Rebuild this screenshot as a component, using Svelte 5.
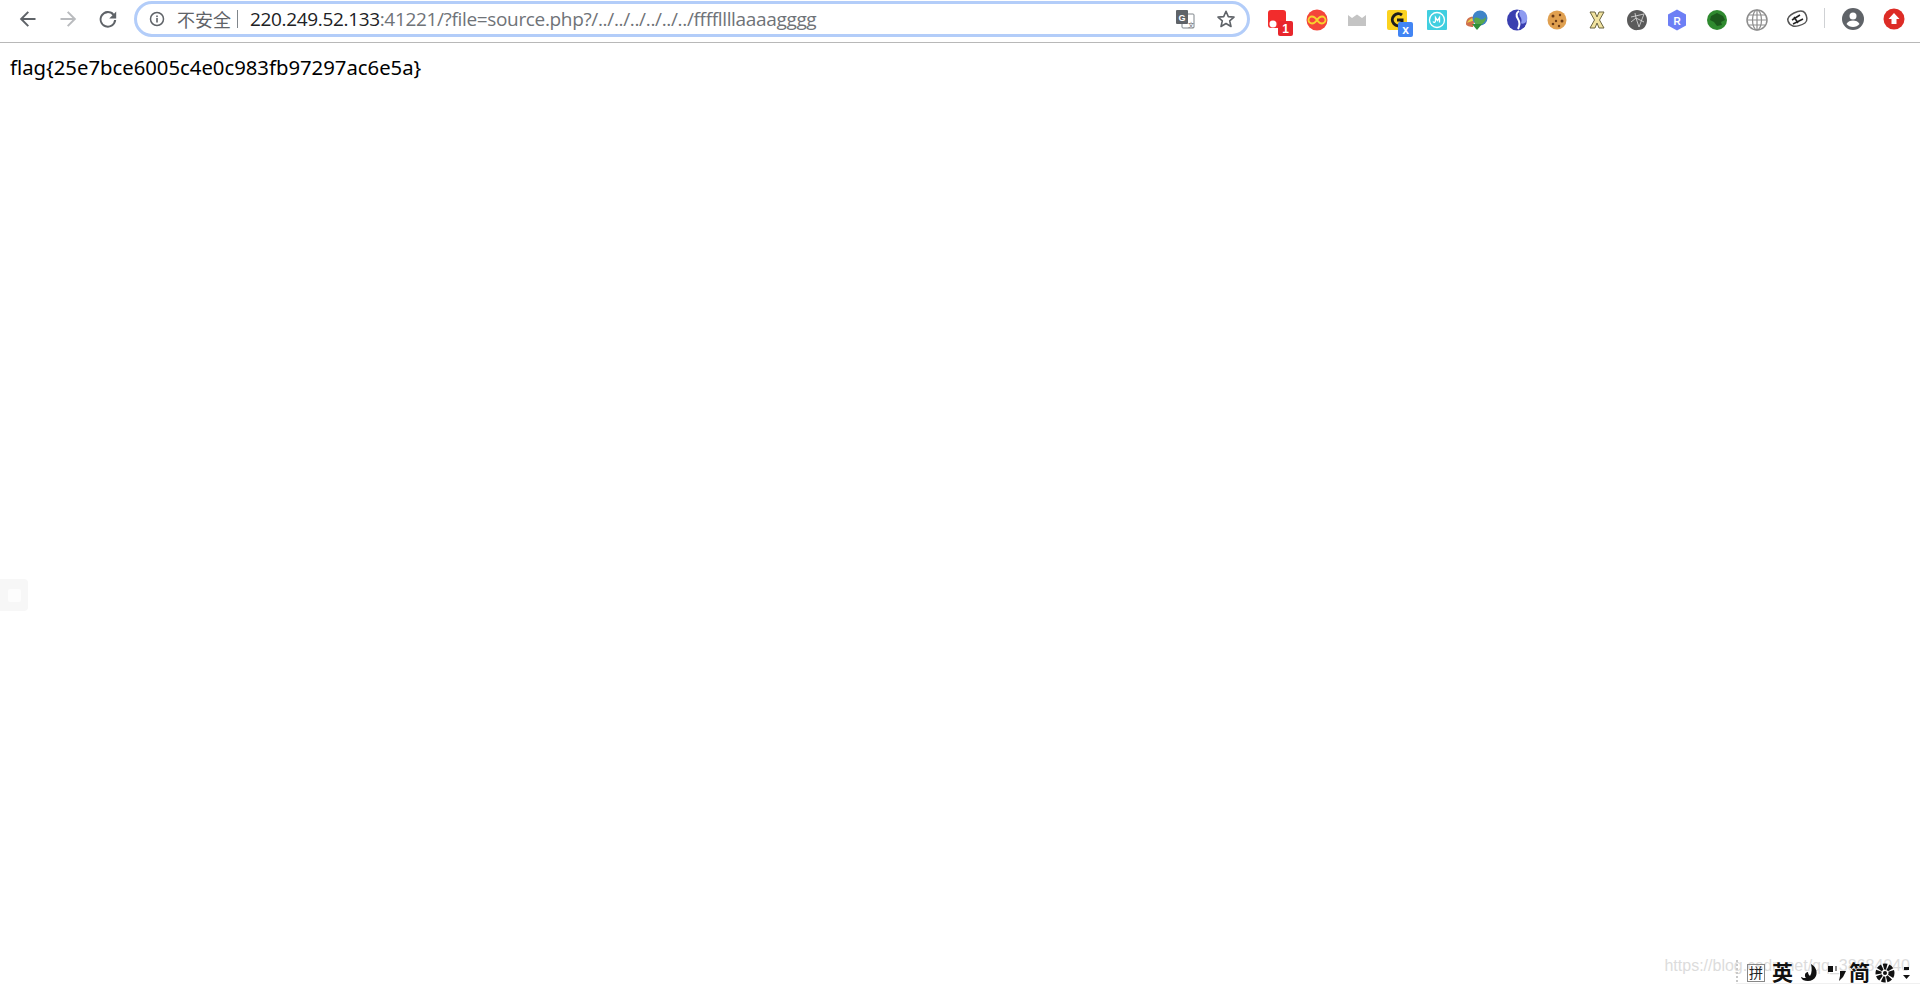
<script lang="ts">
  const host = '220.249.52.133';
  const rest = ':41221/?file=source.php?/../../../../../../ffffllllaaaagggg';
  const flag = 'flag{25e7bce6005c4e0c983fb97297ac6e5a}';
</script>

<div class="page">
  <header class="toolbar">
    <nav class="nav">
      <button class="nav-btn" aria-label="back">
        <svg width="18" height="18" viewBox="0 0 18 18"><path d="M16.5 8H4.6l5.4-5.4L8.6 1.2 0.8 9l7.8 7.8 1.4-1.4L4.6 10h11.9z" fill="#5f6368"/></svg>
      </button>
      <button class="nav-btn" aria-label="forward">
        <svg width="18" height="18" viewBox="0 0 18 18"><path d="M1.5 8h11.900L8 2.600l1.400-1.400L17.200 9l-7.800 7.800L8 15.400l5.400-5.400H1.500z" fill="#b9bbbe"/></svg>
      </button>
      <button class="nav-btn" aria-label="reload">
        <svg width="18" height="18" viewBox="0 0 18 18"><path d="M15 3.700A8.300 8.300 0 1 0 17.200 10h-2.100A6.300 6.300 0 1 1 13.500 5.200L10.200 8.400H17.200V1.500z" fill="#5f6368"/></svg>
      </button>
    </nav>

    <div class="omnibox">
      <svg class="info" width="16" height="16" viewBox="0 0 16 16">
        <circle cx="8" cy="8" r="6.500" fill="none" stroke="#5f6368" stroke-width="1.500"/>
        <rect x="7.200" y="7" width="1.600" height="4.500" fill="#5f6368"/>
        <rect x="7.200" y="4.500" width="1.600" height="1.600" fill="#5f6368"/>
      </svg>
      <span class="insecure">不安全</span>
      <span class="divider"></span>
      <span class="url"><span class="host">{host}</span>{rest}</span>
      <span class="grow"></span>
      <svg class="translate" width="20" height="20" viewBox="0 0 20 20">
        <rect x="7" y="5" width="12" height="14" rx="1" fill="#fff" stroke="#80868b"/>
        <rect x="1" y="1" width="12" height="14" rx="1" fill="#5f6368"/>
        <text x="7" y="12" class="g">G</text>
        <text x="13" y="17.500" class="wen">文</text>
      </svg>
      <svg class="star" width="20" height="20" viewBox="0 0 20 20">
        <path d="M10 2.300l2.300 5.300 5.700.5-4.300 3.800 1.300 5.600L10 14.500l-5 3 1.300-5.600L2 8.100l5.700-.5z" fill="none" stroke="#5f6368" stroke-width="1.600" stroke-linejoin="round"/>
      </svg>
    </div>

    <div class="extensions">
      <span class="ext">
        <svg width="32" height="32" viewBox="0 0 32 32">
          <rect x="7" y="8" width="18" height="18" rx="3" fill="#f22c2c"/>
          <circle cx="12" cy="22" r="3.500" fill="#fff"/>
          <rect x="17" y="19" width="15" height="15" rx="2" fill="#e8262c"/>
          <text x="24.500" y="31" class="badge">1</text>
        </svg>
      </span>
      <span class="ext">
        <svg width="32" height="32" viewBox="0 0 32 32">
          <circle cx="16" cy="18" r="10.500" fill="#f4453a"/>
          <path d="M16 18c-2-3-3.500-3.500-5-3.500a3.500 3.500 0 0 0 0 7c1.500 0 3-.5 5-3.500s3.500-3.500 5-3.500a3.500 3.500 0 0 1 0 7c-1.500 0-3-.5-5-3.500z" fill="none" stroke="#f7d32e" stroke-width="1.800"/>
        </svg>
      </span>
      <span class="ext">
        <svg width="32" height="32" viewBox="0 0 32 32">
          <path d="M7 13l4 3 5-3.500 5 3.500 4-3v11H7z" fill="#c4c4c4"/>
        </svg>
      </span>
      <span class="ext">
        <svg width="32" height="32" viewBox="0 0 32 32">
          <rect x="6" y="8" width="20" height="20" rx="2" fill="#fbd21f"/>
          <path d="M21 13a6 6 0 1 0 0 9.500v-4.500h-5" fill="none" stroke="#1d1d1d" stroke-width="3"/>
          <rect x="17" y="20" width="15" height="15" rx="2" fill="#4285f4"/>
          <text x="24.500" y="32" class="badge">x</text>
        </svg>
      </span>
      <span class="ext">
        <svg width="32" height="32" viewBox="0 0 32 32">
          <rect x="6" y="8" width="20" height="20" rx="1" fill="#41cfe0"/>
          <circle cx="16" cy="18" r="7.500" fill="none" stroke="#fff" stroke-width="1.300"/>
          <path d="M12 19.500c1 1.500 2.500 1 2.500-1v-3l2 3 2-3v5" fill="none" stroke="#fff" stroke-width="1.300"/>
        </svg>
      </span>
      <span class="ext">
        <svg width="32" height="32" viewBox="0 0 32 32">
          <path d="M5 22c0-6 4-8 9-7l-2 10c-3 0-7-1-7-3z" fill="#d0704c"/>
          <path d="M6 21c1-3 4-5 7-5l-1 3c-2 0-4 1-6 2z" fill="#e8cf46"/>
          <circle cx="19" cy="16" r="7.500" fill="#3f84c8"/>
          <path d="M13 17c2-3 5-1 6 0s3 1 6-2c0 4-3 8-7 8s-5-3-5-6z" fill="#5aa84a"/>
          <path d="M11 22h10l-5 6z" fill="#2f8f3a"/>
        </svg>
      </span>
      <span class="ext">
        <svg width="32" height="32" viewBox="0 0 32 32">
          <ellipse cx="16" cy="18" rx="10" ry="10.500" fill="#3a3fb0"/>
          <path d="M20 7.800c5 1 7 6 6 10.500-1 3-4 4-6 3 1-3 .5-5-1-7-1-2-1-5 1-6.500z" fill="#8e9bf0"/>
          <path d="M18 9c-3 2-3 5-1 8s2 6 0 10" fill="none" stroke="#fff" stroke-width="2"/>
        </svg>
      </span>
      <span class="ext">
        <svg width="32" height="32" viewBox="0 0 32 32">
          <circle cx="16" cy="18" r="9.500" fill="#e0a050"/>
          <circle cx="12" cy="14" r="1.500" fill="#6a3a18"/>
          <circle cx="19" cy="13" r="1.200" fill="#6a3a18"/>
          <circle cx="21" cy="19" r="1.500" fill="#6a3a18"/>
          <circle cx="15" cy="19" r="1.200" fill="#6a3a18"/>
          <circle cx="12" cy="22" r="1.300" fill="#6a3a18"/>
          <circle cx="18" cy="24" r="1.200" fill="#6a3a18"/>
        </svg>
      </span>
      <span class="ext">
        <svg width="32" height="32" viewBox="0 0 32 32">
          <path d="M9 10h5l2 5 2-5h5l-4.500 8 4.500 8h-5l-2-5-2 5H9l4.500-8z" fill="#f1e3a0" stroke="#6b6540" stroke-width="1"/>
        </svg>
      </span>
      <span class="ext">
        <svg width="32" height="32" viewBox="0 0 32 32">
          <path d="M16 8c5 0 10 4 10 10 0 5-3 10-9 10-6 1-11-4-11-10 0-6 5-10 10-10z" fill="#5a5a5a"/>
          <path d="M10 15l13-3-5 13-3-9 8 4M14 11l1 5-5 4" fill="none" stroke="#ddd" stroke-width=".8"/>
        </svg>
      </span>
      <span class="ext">
        <svg width="32" height="32" viewBox="0 0 32 32">
          <path d="M16 7.500l9 5v11l-9 5-9-5v-11z" fill="#6d7ff5"/>
          <text x="16" y="22.500" class="r">R</text>
        </svg>
      </span>
      <span class="ext">
        <svg width="32" height="32" viewBox="0 0 32 32">
          <circle cx="16" cy="18" r="10" fill="#2f8a2f"/>
          <path d="M10 14l6-3 6 3 2 4-4 2 1 3-5 1-3-4-4-2z" fill="#1c5a1c"/>
        </svg>
      </span>
      <span class="ext">
        <svg width="32" height="32" viewBox="0 0 32 32">
          <circle cx="16" cy="18" r="10" fill="none" stroke="#8d8d8d" stroke-width="1.500"/>
          <ellipse cx="16" cy="18" rx="4.500" ry="10" fill="none" stroke="#8d8d8d" stroke-width="1.200"/>
          <path d="M16 8v20M6 18h20M7.500 13h17M7.500 23h17" fill="none" stroke="#8d8d8d" stroke-width="1.200"/>
        </svg>
      </span>
      <span class="ext">
        <svg width="32" height="32" viewBox="0 0 32 32">
          <path d="M7 19c-1-3 2-6 6-8 4-2 9-3 11 0 2 3 3 8 0 10s-9 4-12 3-4-2-5-5z" fill="#fff" stroke="#555" stroke-width="1.500"/>
          <path d="M11 18l8-5M12 22l10-5M13 15l4 6" fill="none" stroke="#222" stroke-width="1.500"/>
        </svg>
      </span>
    </div>

    <span class="sep"></span>

    <div class="profile">
      <svg width="22" height="22" viewBox="0 0 22 22">
        <circle cx="11" cy="11" r="11" fill="#5f6368"/>
        <circle cx="11" cy="8" r="3.500" fill="#fff"/>
        <path d="M4.500 16c1-2.500 4-3.500 6.500-3.500s5.500 1 6.500 3.500c-1.500 2-4 3-6.500 3s-5-1-6.500-3z" fill="#fff"/>
      </svg>
      <svg width="22" height="22" viewBox="0 0 22 22">
        <circle cx="11" cy="11" r="10.500" fill="#dd2c26"/>
        <path d="M11 5l5.500 6H13.500v5h-5v-5H5.500z" fill="#fff"/>
      </svg>
    </div>
  </header>

  <main class="content">{flag}</main>

  <div class="side-tab"><span></span></div>

  <div class="watermark">https://blog.csdn.net/qq_38684040</div>
  <div class="ime">
    <span class="grip"></span>
    <span class="pin">拼</span>
    <span class="ime-char ying">英</span>
    <svg class="moon" width="20" height="20" viewBox="0 0 20 20"><path d="M11 1c4 2 7 7 5 12s-8 6-13 4c-1-1-2-2-2-3 2 1 3 1 5 1-2-2-1-6 2-6 0 2 1 3 2 4 2-3 2-8 1-12z" fill="#111"/></svg>
    <svg class="punct" width="20" height="22" viewBox="0 0 20 22"><rect x="1" y="4" width="5" height="6" fill="#111"/><rect x="8" y="4" width="2" height="5" fill="#888"/><path d="M13 9h6l-3 6-4 4 1-5z" fill="#111"/></svg>
    <span class="ime-char jian">简</span>
    <svg class="gear" width="20" height="20" viewBox="0 0 20 20"><circle cx="10" cy="10" r="6.500" fill="none" stroke="#111" stroke-width="6" stroke-dasharray="3.500 1.200"/><circle cx="10" cy="10" r="2" fill="#111"/></svg>
    <svg class="more" width="10" height="22" viewBox="0 0 10 22"><rect x="2" y="5" width="5" height="3" fill="#111"/><path d="M1 13h7l-3.500 4z" fill="#111"/></svg>
  </div>
</div>

<style>
  :global(body) {
    background: #fff;
  }
  .page {
    position: relative;
    height: 984px;
    overflow: hidden;
    font-family: 'Liberation Sans', 'Noto Sans CJK SC', sans-serif;
  }
  .toolbar {
    display: flex;
    align-items: center;
    height: 42px;
    border-bottom: 1px solid #b8b8b8;
    background: #fff;
  }
  .nav {
    display: flex;
    gap: 2px;
    padding-left: 9px;
    width: 129px;
    box-sizing: border-box;
    margin-top: -4px;
  }
  .nav-btn {
    display: flex;
    align-items: center;
    justify-content: center;
    width: 38px;
    height: 30px;
    padding: 0;
    border: 0;
    background: none;
  }
  .omnibox {
    display: flex;
    align-items: center;
    box-sizing: border-box;
    width: 1116px;
    height: 36px;
    margin-left: 5px;
    margin-top: -5px;
    padding: 0 11px 0 12px;
    border: 3px solid #b3cdf9;
    border-radius: 18px;
  }
  .info {
    flex: none;
  }
  .insecure {
    margin-left: 12px;
    font-size: 18px;
    color: #5f6368;
  }
  .divider {
    width: 1px;
    height: 18px;
    margin: 0 12px 0 6px;
    background: #80868b;
  }
  .url {
    font-family: 'Open Sans', sans-serif;
    font-size: 19px;
    letter-spacing: -0.34px;
    color: #6f7378;
    white-space: nowrap;
  }
  .host {
    color: #202124;
  }
  .grow {
    flex: 1;
  }
  .translate {
    margin-right: 21px;
  }
  .g {
    font: bold 9px 'Liberation Sans', sans-serif;
    fill: #fff;
    text-anchor: middle;
  }
  .wen {
    font: 6px 'Noto Sans CJK SC', sans-serif;
    fill: #5f6368;
  }
  .extensions {
    display: flex;
    margin-left: 7px;
    margin-top: -6px;
  }
  .ext {
    display: flex;
    align-items: center;
    justify-content: center;
    width: 40px;
    height: 36px;
  }
  .ext svg {
    overflow: visible;
  }
  .badge {
    font: bold 12px 'Liberation Sans', sans-serif;
    fill: #fff;
    text-anchor: middle;
  }
  .r {
    font: bold 10px 'Liberation Sans', sans-serif;
    fill: #fff;
    text-anchor: middle;
  }
  .sep {
    width: 1px;
    height: 20px;
    margin-left: 7px;
    margin-top: -6px;
    background: #cfd1d4;
  }
  .profile {
    display: flex;
    gap: 19px;
    margin-left: 17px;
    margin-top: -5px;
  }
  .content {
    padding: 12px 0 0 10px;
    font-family: 'Noto Sans', sans-serif;
    font-size: 20.3px;
    line-height: 24px;
    color: #000;
  }
  .side-tab {
    position: absolute;
    left: 0;
    top: 579px;
    display: flex;
    align-items: center;
    justify-content: center;
    width: 28px;
    height: 32px;
    border-radius: 0 4px 4px 0;
    background: #f7f7f7;
  }
  .side-tab span {
    width: 13px;
    height: 13px;
    border-radius: 2px;
    background: #fdfdfd;
  }
  .watermark {
    position: absolute;
    right: 10px;
    top: 957px;
    font-size: 16px;
    color: #dcdcdc;
    white-space: nowrap;
  }
  .ime {
    position: absolute;
    right: 0;
    top: 954px;
    box-sizing: border-box;
    display: flex;
    align-items: center;
    width: 184px;
    height: 30px;
    padding-top: 8px;
    border-bottom: 1px solid #f0f0f0;
  }
  .grip {
    width: 0;
    height: 26px;
    border-left: 2px dotted #c8c8c8;
  }
  .pin {
    box-sizing: border-box;
    flex: none;
    width: 18px;
    height: 18px;
    margin-left: 9px;
    border: 1px solid #888;
    font-size: 14px;
    line-height: 16px;
    text-align: center;
    color: #222;
  }
  .ime-char {
    font-size: 21px;
    line-height: 22px;
    font-weight: 700;
    color: #111;
  }
  .ying {
    margin-left: 7px;
  }
  .moon {
    margin-left: 7px;
  }
  .punct {
    margin-left: 7px;
  }
  .jian {
    margin-left: 2px;
  }
  .gear {
    margin-left: 5px;
  }
  .more {
    margin-left: 7px;
  }
</style>
